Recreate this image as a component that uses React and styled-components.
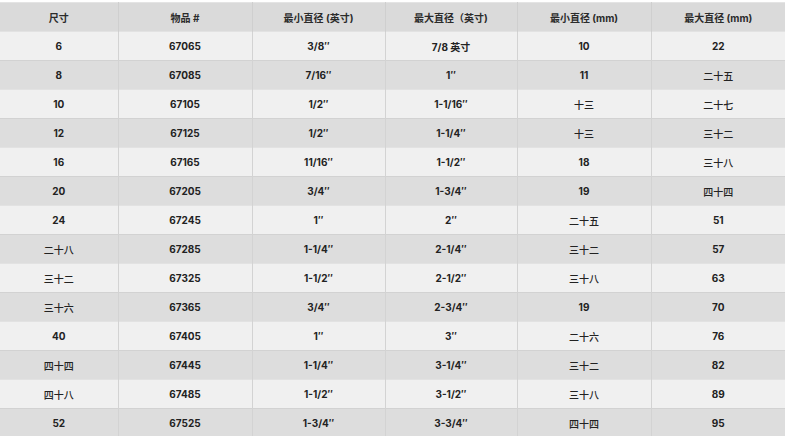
import React from 'react';
import styled, { createGlobalStyle } from 'styled-components';

const GlobalStyle = createGlobalStyle`
  body {
    margin: 0;
    background: #ffffff;
    font-family: Inter, "Noto Sans CJK SC", sans-serif;
  }
`;

const TableWrapper = styled.div`
  width: 785px;
  padding-top: 2px;
  overflow: hidden;
`;

const SizeTable = styled.table`
  width: 785px;
  border-collapse: collapse;
  table-layout: fixed;
  border-top: 1px solid #e4e4e4;
  color: #222222;
  font-size: 10px;
  font-weight: 700;
  text-align: center;
`;

const HeadCell = styled.th`
  height: 28px;
  padding: 0;
  background-color: #dadada;
  border-right: 1px solid #cfcfcf;
  font-weight: 700;
  color: #2b2b2b;

  &:last-child {
    border-right: none;
  }
`;

const Row = styled.tr`
  background-color: ${(p) => (p.$shade ? '#dddddd' : '#f0f0f0')};
  border-top: 1px solid ${(p) => (p.$shade ? '#d2d2d2' : '#e2e2e2')};
`;

const Cell = styled.td`
  height: 28px;
  padding: 0;
  border-right: 1px solid #d3d3d3;
  font-weight: ${(p) => (p.$cjk ? 500 : 700)};
  font-family: ${(p) =>
    p.$cjk ? '"Noto Sans CJK SC", sans-serif' : 'Inter, "Noto Sans CJK SC", sans-serif'};

  &:last-child {
    border-right: none;
  }
`;

const columns = [
  { label: '尺寸', width: 118 },
  { label: '物品 #', width: 134 },
  { label: '最小直径 (英寸)', width: 133 },
  { label: '最大直径（英寸)', width: 132 },
  { label: '最小直径 (mm)', width: 134 },
  { label: '最大直径 (mm)', width: 134 },
];

const rows = [
  ['6', '67065', '3/8″', '7/8 英寸', '10', '22'],
  ['8', '67085', '7/16″', '1″', '11', '二十五'],
  ['10', '67105', '1/2″', '1-1/16″', '十三', '二十七'],
  ['12', '67125', '1/2″', '1-1/4″', '十三', '三十二'],
  ['16', '67165', '11/16″', '1-1/2″', '18', '三十八'],
  ['20', '67205', '3/4″', '1-3/4″', '19', '四十四'],
  ['24', '67245', '1″', '2″', '二十五', '51'],
  ['二十八', '67285', '1-1/4″', '2-1/4″', '三十二', '57'],
  ['三十二', '67325', '1-1/2″', '2-1/2″', '三十八', '63'],
  ['三十六', '67365', '3/4″', '2-3/4″', '19', '70'],
  ['40', '67405', '1″', '3″', '二十六', '76'],
  ['四十四', '67445', '1-1/4″', '3-1/4″', '三十二', '82'],
  ['四十八', '67485', '1-1/2″', '3-1/2″', '三十八', '89'],
  ['52', '67525', '1-3/4″', '3-3/4″', '四十四', '95'],
];

const isCjkNumber = (value) => /^[一二三四五六七八九十]+$/.test(value);

const App = () => (
  <>
    <GlobalStyle />
    <TableWrapper>
      <SizeTable>
        <colgroup>
          {columns.map((col) => (
            <col key={col.label} style={{ width: col.width }} />
          ))}
        </colgroup>
        <thead>
          <tr>
            {columns.map((col) => (
              <HeadCell key={col.label}>{col.label}</HeadCell>
            ))}
          </tr>
        </thead>
        <tbody>
          {rows.map((row, i) => (
            <Row key={row[1]} $shade={i % 2 === 1}>
              {row.map((value, j) => (
                <Cell key={j} $cjk={isCjkNumber(value)}>
                  {value}
                </Cell>
              ))}
            </Row>
          ))}
        </tbody>
      </SizeTable>
    </TableWrapper>
  </>
);

export default App;
